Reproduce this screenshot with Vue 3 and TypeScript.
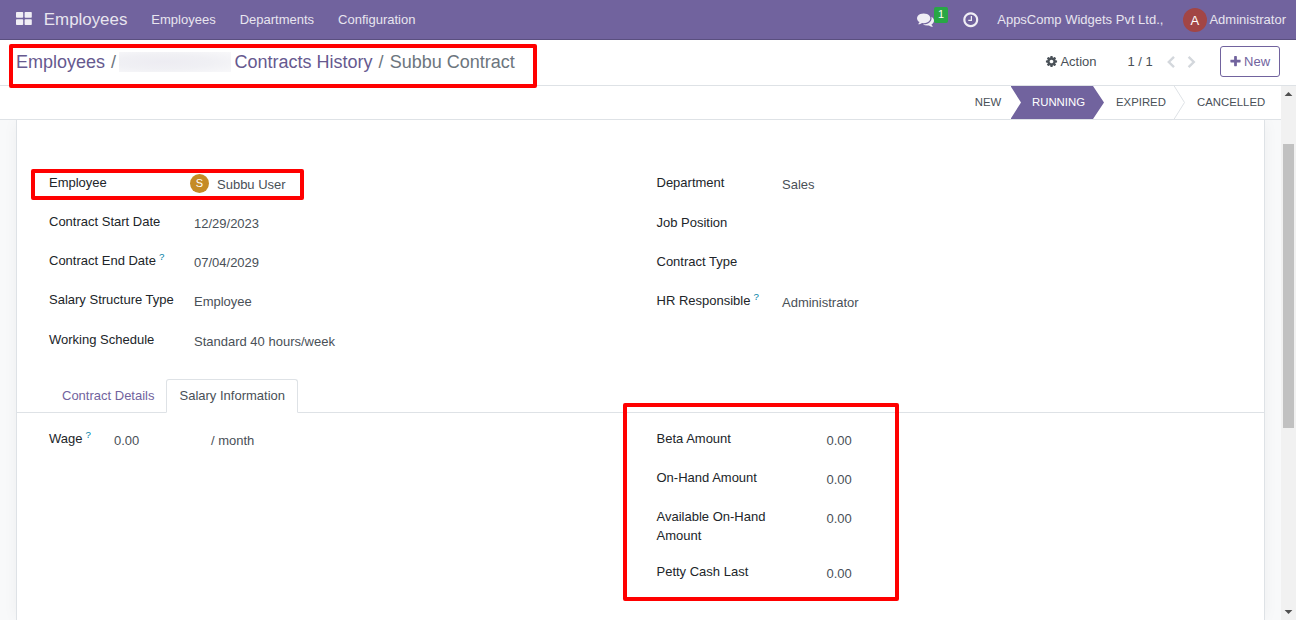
<script setup lang="ts">
interface Field {
  label: string
  value?: string
  help?: boolean
  avatar?: string
}

const menus: string[] = ['Employees', 'Departments', 'Configuration']

const contractFields: Field[] = [
  { label: 'Employee', value: 'Subbu User', avatar: 'S' },
  { label: 'Contract Start Date', value: '12/29/2023' },
  { label: 'Contract End Date', value: '07/04/2029', help: true },
  { label: 'Salary Structure Type', value: 'Employee' },
  { label: 'Working Schedule', value: 'Standard 40 hours/week' },
]

const jobFields: Field[] = [
  { label: 'Department', value: 'Sales' },
  { label: 'Job Position' },
  { label: 'Contract Type' },
  { label: 'HR Responsible', value: 'Administrator', help: true },
]

const amountFields: Field[] = [
  { label: 'Beta Amount', value: '0.00' },
  { label: 'On-Hand Amount', value: '0.00' },
  { label: 'Available On-Hand Amount', value: '0.00' },
  { label: 'Petty Cash Last', value: '0.00' },
]
</script>

<template>
  <div class="app">
    <header class="navbar">
      <svg class="apps" width="16" height="13" viewBox="0 0 16 13">
        <rect x="0" y="0" width="7.2" height="5.8" rx="0.8" />
        <rect x="8.6" y="0" width="7.2" height="5.8" rx="0.8" />
        <rect x="0" y="7.2" width="7.2" height="5.8" rx="0.8" />
        <rect x="8.6" y="7.2" width="7.2" height="5.8" rx="0.8" />
      </svg>
      <span class="brand">Employees</span>
      <nav class="menus">
        <a v-for="menu in menus" :key="menu">{{ menu }}</a>
      </nav>
      <div class="systray">
        <span class="messages">
          <svg width="17" height="17" viewBox="0 0 1792 1792">
            <path d="M1408 768q0 139-94 257t-256.5 186.5-353.5 68.5q-86 0-176-16-124 88-278 128-36 9-86 16h-3q-11 0-20.5-8t-11.5-21q-1-3-1-6.5t.5-6.5 2-6l2.5-5 3.5-5.5 4-5 4.5-5 4-4.5q5-6 23-25t26-29.5 22.5-29 25-38.5 20.5-44q-124-72-195-177t-71-224q0-139 94-257t256.5-186.5 353.5-68.5 353.5 68.5 256.5 186.5 94 257zm384 256q0 120-71 224.5t-195 176.5q10 24 20.5 44t25 38.5 22.5 29 26 29.5 23 25q1 1 4 4.5t4.5 5 4 5 3.5 5.5l2.5 5 2 6 .5 6.5-1 6.5q-3 14-13 22t-22 7q-50-7-86-16-154-40-278-128-90 16-176 16-271 0-472-132 58 4 88 4 161 0 309-45t264-129q125-92 192-212t67-254q0-77-23-152 129 71 204 178t75 230z" />
          </svg>
          <span class="badge">1</span>
        </span>
        <svg class="clock" width="17.5" height="17.5" viewBox="0 0 1792 1792">
          <path d="M1024 544v448q0 14-9 23t-23 9h-320q-14 0-23-9t-9-23v-64q0-14 9-23t23-9h224v-352q0-14 9-23t23-9h64q14 0 23 9t9 23zm416 352q0-148-73-273t-198-198-273-73-273 73-198 198-73 273 73 273 198 198 273 73 273-73 198-198 73-273zm224 0q0 209-103 385.5t-279.5 279.5-385.5 103-385.5-103-279.5-279.5-103-385.5 103-385.5 279.5-279.5 385.5-103 385.5 103 279.5 279.5 103 385.5z" />
        </svg>
        <span class="company">AppsComp Widgets Pvt Ltd.,</span>
        <span class="avatar user-avatar">A</span>
        <span>Administrator</span>
      </div>
    </header>

    <div class="control-panel">
      <div class="breadcrumb">
        <a>Employees</a>
        <span class="sep">/</span>
        <span class="redacted"></span>
        <a>Contracts History</a>
        <span class="sep">/</span>
        <span class="current">Subbu Contract</span>
      </div>
      <div class="actions">
        <span class="action">
          <svg width="13" height="13" viewBox="0 0 1792 1792">
            <path d="M1152 896q0-106-75-181t-181-75-181 75-75 181 75 181 181 75 181-75 75-181zm512-109v222q0 12-8 23t-20 13l-185 28q-19 54-39 91 35 50 107 138 10 12 10 25t-9 23q-27 37-99 108t-94 71q-12 0-26-9l-138-108q-44 23-91 38-16 136-29 186-7 28-36 28h-222q-14 0-24.5-8.5t-11.5-21.5l-28-184q-49-16-90-37l-141 107q-10 9-25 9-14 0-25-11-126-114-165-168-7-10-7-23 0-12 8-23 15-21 51-66.5t54-70.5q-27-50-41-99l-183-27q-13-2-21-12.5t-8-23.5v-222q0-12 8-23t19-13l186-28q14-46 39-92-40-57-107-138-10-12-10-24 0-10 9-23 26-36 98.5-107.5t94.5-71.5q13 0 26 10l138 107q44-23 91-38 16-136 29-186 7-28 36-28h222q14 0 24.5 8.5t11.5 21.5l28 184q49 16 90 37l142-107q9-9 24-9 13 0 25 10 129 119 165 170 7 8 7 22 0 12-8 23-15 21-51 66.5t-54 70.5q26 50 41 98l183 28q13 2 21 12.5t8 23.5z" />
          </svg>
          Action
        </span>
        <span class="pager">1 / 1</span>
        <svg class="chevrons" width="30" height="14" viewBox="0 0 30 14">
          <path d="M8 1.8 2.8 7 8 12.2M22.6 1.8 27.8 7l-5.2 5.2" />
        </svg>
        <button class="new-button">
          <svg width="13" height="13" viewBox="0 0 1792 1792">
            <path d="M1600 736v192q0 40-28 68t-68 28h-416v416q0 40-28 68t-68 28h-192q-40 0-68-28t-28-68v-416h-416q-40 0-68-28t-28-68v-192q0-40 28-68t68-28h416v-416q0-40 28-68t68-28h192q40 0 68 28t28 68v416h416q40 0 68 28t28 68z" />
          </svg>
          New
        </button>
      </div>
    </div>

    <div class="content">
      <main class="form-view">
        <div class="statusbar">
          <span class="stage new">NEW</span>
          <span class="stage running">RUNNING</span>
          <span class="stage expired">
            EXPIRED
            <svg width="12" height="33" viewBox="0 0 12 33">
              <path d="M0.2 0 10.5 16.5 0.2 33" />
            </svg>
          </span>
          <span class="stage cancelled">CANCELLED</span>
        </div>

        <div class="sheet-area">
          <section class="sheet">
            <div class="groups top">
              <div class="group contract">
                <div v-for="field in contractFields" :key="field.label" class="row">
                  <label>{{ field.label }}<sup v-if="field.help">?</sup></label>
                  <span class="value" :class="{ 'with-avatar': field.avatar }">
                    <span v-if="field.avatar" class="avatar small">{{ field.avatar }}</span>
                    {{ field.value }}
                  </span>
                </div>
              </div>
              <div class="group job">
                <div v-for="field in jobFields" :key="field.label" class="row">
                  <label>{{ field.label }}<sup v-if="field.help">?</sup></label>
                  <span class="value">{{ field.value }}</span>
                </div>
              </div>
            </div>

            <div class="tabs">
              <a class="tab">Contract Details</a>
              <a class="tab active">Salary Information</a>
            </div>

            <div class="groups">
              <div class="group wage">
                <div class="row">
                  <label>Wage<sup>?</sup></label>
                  <span class="value amount">0.00</span>
                  <span class="value">/ month</span>
                </div>
              </div>
              <div class="group amounts">
                <div v-for="field in amountFields" :key="field.label" class="row">
                  <label>{{ field.label }}</label>
                  <span class="value">{{ field.value }}</span>
                </div>
              </div>
            </div>
          </section>
        </div>
      </main>
      <div class="scrollbar">
        <svg width="15" height="15" viewBox="0 0 15 15"><path d="M3.6 10 7.5 6l3.9 4z" /></svg>
        <div class="thumb"></div>
        <svg class="down" width="15" height="15" viewBox="0 0 15 15"><path d="M3.6 5 7.5 9l3.9-4z" /></svg>
      </div>
    </div>

    <div class="highlight highlight-path"></div>
    <div class="highlight highlight-employee"></div>
    <div class="highlight highlight-amounts"></div>
  </div>
</template>

<style>
body {
  margin: 0;
  overflow: hidden;
}
</style>

<style scoped>
* {
  box-sizing: border-box;
}
.app {
  position: relative;
  display: flex;
  flex-direction: column;
  width: 1296px;
  height: 620px;
  overflow: hidden;
  background: #fff;
  color: #495057;
  font: 13px/19.5px "Liberation Sans", Arial, sans-serif;
}
svg {
  display: block;
  flex: none;
}
.navbar {
  display: flex;
  align-items: center;
  flex: none;
  height: 40px;
  padding: 0 10px 0 16px;
  background: #71639e;
  border-bottom: 1px solid #5a4f7f;
  color: #e8e5ef;
  white-space: nowrap;
}
.navbar svg {
  fill: #f0eef5;
}
.apps {
  margin-top: -2px;
}
.brand {
  margin-left: 11.8px;
  font-size: 16.9px;
}
.menus {
  display: flex;
  gap: 24px;
  margin-left: 24px;
}
.systray {
  display: flex;
  align-items: center;
  margin-left: auto;
}
.messages {
  position: relative;
  margin-right: 28px;
}
.badge {
  position: absolute;
  left: 16.5px;
  top: -4px;
  width: 14.5px;
  height: 16px;
  border-radius: 2px;
  background: #28a745;
  color: #fff;
  font-size: 11px;
  line-height: 14px;
  text-align: center;
}
.company {
  margin: 0 19.5px 0 17.5px;
}
.avatar {
  display: inline-block;
  flex: none;
  border-radius: 50%;
  color: #fff;
  text-align: center;
}
.user-avatar {
  width: 24px;
  height: 24px;
  margin-right: 2.5px;
  background: #a24545;
  line-height: 25px;
}
.control-panel {
  display: flex;
  justify-content: space-between;
  flex: none;
  height: 46px;
  padding: 0 16px;
  border-bottom: 1px solid #dee2e6;
}
.breadcrumb {
  display: flex;
  align-items: center;
  height: 44px;
  font-size: 18px;
  line-height: 27px;
  white-space: nowrap;
}
.breadcrumb a {
  color: #66598f;
}
.sep,
.current {
  color: #6c757d;
}
.sep {
  margin: 0 6px;
}
.redacted {
  width: 112px;
  height: 20px;
  margin: 0 3.5px 0 -3px;
  background: radial-gradient(ellipse at 40% 50%, #edecf2 0%, #f0f0f4 50%, #f8f8fa 100%);
}
.actions {
  display: flex;
  align-items: center;
  height: 43px;
}
.action {
  display: flex;
  align-items: center;
  gap: 2px;
}
.action svg {
  fill: #495057;
}
.pager {
  margin-left: 31px;
}
.chevrons {
  margin: 0 24.4px 0 12.8px;
  fill: none;
  stroke: #d3d7dc;
  stroke-width: 2.4;
}
.new-button {
  display: flex;
  align-items: center;
  justify-content: center;
  gap: 2.2px;
  width: 60px;
  height: 31px;
  padding: 0 1px 0 0;
  border: 1px solid #71639e;
  border-radius: 3px;
  background: #fff;
  color: #71639e;
  font: inherit;
}
.new-button svg {
  fill: #71639e;
}
.content {
  display: flex;
  flex: 1;
  min-height: 0;
}
.form-view {
  display: flex;
  flex-direction: column;
  width: 1281px;
}
.statusbar {
  display: flex;
  justify-content: flex-end;
  flex: none;
  height: 34px;
  border-bottom: 1px solid #dee2e6;
  font-size: 11.375px;
  line-height: 33px;
}
.stage {
  height: 33px;
}
.new {
  width: 35.7px;
}
.running {
  width: 94px;
  padding-left: 21.5px;
  background: #71639e;
  color: #fff;
  clip-path: polygon(0 0, 82.5px 0, 93.5px 50%, 82.5px 100%, 0 100%, 10.5px 50%);
}
.expired {
  display: flex;
  justify-content: space-between;
  width: 82px;
  padding-left: 11.5px;
}
.expired svg {
  margin-right: 0.5px;
  fill: none;
  stroke: #dee2e6;
}
.cancelled {
  width: 94.5px;
  padding-left: 10.5px;
}
.sheet-area {
  display: flex;
  flex: 1;
  min-height: 0;
  padding: 0 16px;
  overflow: hidden;
  background: #f8f9fa;
}
.sheet {
  flex: 1;
  min-width: 0;
  border: solid #dee2e6;
  border-width: 0 1px;
  background: #fff;
  box-shadow: 0 0 16px -2px rgba(0, 0, 0, 0.06);
}
.groups {
  display: flex;
  padding: 15.55px 32px 0;
  color: #495057;
}
.groups.top {
  height: 259px;
  padding-top: 52.75px;
}
.group {
  flex: none;
  width: 607.5px;
}
.group + .group {
  flex: 1;
  width: auto;
}
.row {
  display: flex;
  align-items: flex-start;
  min-height: 39.2px;
  padding-bottom: 16px;
}
.job .row:first-child {
  min-height: 39.8px;
}
label {
  flex: none;
  color: #212529;
}
.contract label {
  width: 145px;
}
.job label {
  width: 125.5px;
}
.wage label {
  width: 65px;
}
.amounts label {
  width: 125px;
  margin-right: 45px;
}
sup {
  position: relative;
  top: -5px;
  margin-left: 3px;
  color: #0180a5;
  font-size: 9.75px;
  line-height: 0;
  vertical-align: baseline;
}
.value {
  height: 19.5px;
  padding-top: 2px;
}
.amount {
  width: 97px;
}
.with-avatar {
  display: flex;
  margin-left: -4px;
}
.small {
  width: 19px;
  height: 19px;
  margin: -1px 8px 0 0;
  background: #c58b25;
  font-size: 11px;
  line-height: 19px;
}
.tabs {
  display: flex;
  height: 34px;
  padding-left: 32px;
  border-bottom: 1px solid #dee2e6;
}
.tab {
  height: 34px;
  padding: 7px 12px 0 13px;
  color: #71639e;
}
.tab.active {
  padding: 6px 12px 0;
  border: 1px solid #dee2e6;
  border-bottom-color: #fff;
  border-radius: 3px 3px 0 0;
  color: #495057;
}
.scrollbar {
  display: flex;
  flex-direction: column;
  align-items: center;
  width: 15px;
  background: #f1f1f1;
}
.scrollbar svg {
  fill: #505050;
}
.thumb {
  width: 11px;
  height: 284px;
  margin-top: 43px;
  background: #c1c1c1;
}
.down {
  margin-top: auto;
}
.highlight {
  position: absolute;
  border: 4px solid #f00;
  border-radius: 2px;
}
.highlight-path {
  left: 9px;
  top: 44px;
  width: 528px;
  height: 44px;
}
.highlight-employee {
  left: 31px;
  top: 169px;
  width: 273px;
  height: 31px;
}
.highlight-amounts {
  left: 623px;
  top: 403px;
  width: 276px;
  height: 198px;
}
</style>
